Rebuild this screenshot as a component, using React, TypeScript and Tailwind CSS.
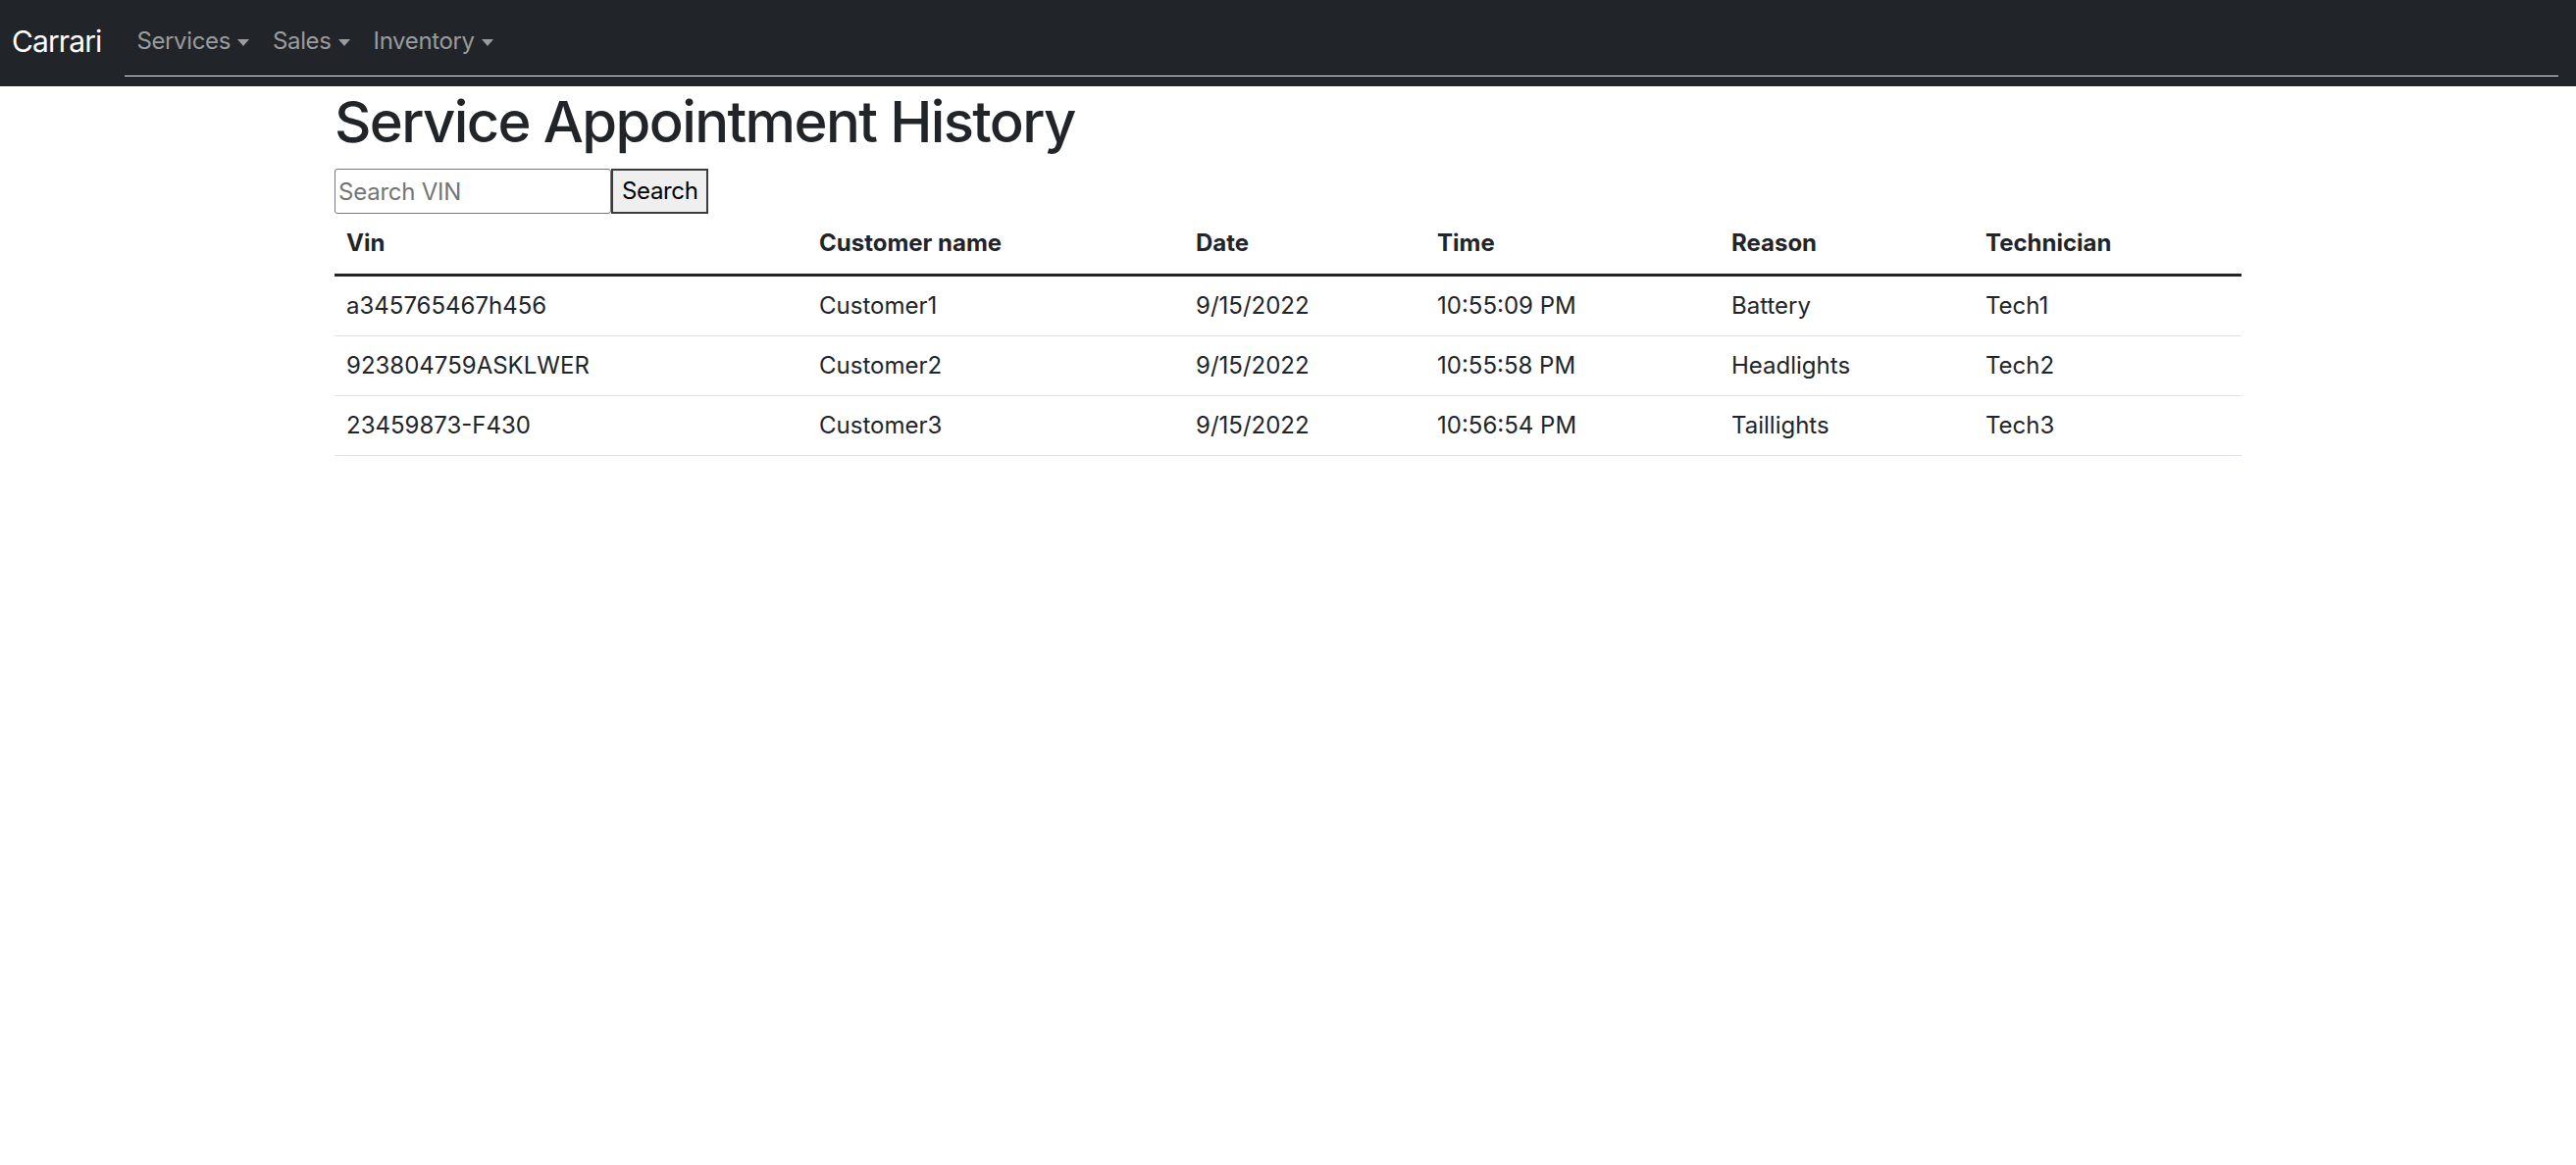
import { useState } from 'react';

const appointments = [
  { vin: 'a345765467h456', customer: 'Customer1', date: '9/15/2022', time: '10:55:09 PM', reason: 'Battery', tech: 'Tech1' },
  { vin: '923804759ASKLWER', customer: 'Customer2', date: '9/15/2022', time: '10:55:58 PM', reason: 'Headlights', tech: 'Tech2' },
  { vin: '23459873-F430', customer: 'Customer3', date: '9/15/2022', time: '10:56:54 PM', reason: 'Taillights', tech: 'Tech3' },
];

function NavItem({ label }: { label: string }) {
  return (
    <a className="flex items-center px-3 text-[24px] leading-[36px] tracking-[-0.015em] text-[#999b9e] cursor-pointer">
      {label}
      <span className="ml-[7px] mt-[2px] inline-block w-0 h-0 border-l-[6px] border-r-[6px] border-t-[7px] border-l-transparent border-r-transparent border-t-[#999b9e]" />
    </a>
  );
}

export default function App() {
  const [vin, setVin] = useState('');

  return (
    <div className="min-h-screen bg-white text-[#212529] font-['Inter','Liberation_Sans',sans-serif] text-[24px] leading-[36px]">
      {/* Navbar */}
      <nav className="h-[88px] bg-[#212529] flex items-start pl-3 pr-[18px]">
        <a className="mt-[20px] mr-6 text-[30px] leading-[45px] tracking-[-0.03em] text-white">Carrari</a>
        <div className="flex-1 h-[77.5px] border-b-[1.5px] border-[#e9ecef]">
          <div className="flex pt-[24px]">
            <NavItem label="Services" />
            <NavItem label="Sales" />
            <NavItem label="Inventory" />
          </div>
        </div>
      </nav>

      <div className="w-[1944px] mx-auto">
        <h1 className="text-[58px] leading-[72px] font-medium tracking-[-0.028em] mb-3">Service Appointment History</h1>

        <form className="flex" onSubmit={e => e.preventDefault()}>
          <input
            value={vin}
            onChange={e => setVin(e.target.value)}
            placeholder="Search VIN"
            className="w-[282px] h-[46px] border-[1.5px] border-[#767676] rounded-[3px] px-[3px] text-[24px] leading-[36px] tracking-[-0.01em] text-black placeholder:text-[#757575] outline-none"
          />
          <button className="h-[46px] px-[9px] bg-[#efefef] border-2 border-[#3b3b3b] text-[24px] leading-[36px] tracking-[-0.015em] text-black">
            Search
          </button>
        </form>

        <table className="w-full table-fixed border-separate border-spacing-0 text-left">
          <colgroup>
            <col className="w-[482px]" />
            <col className="w-[384px]" />
            <col className="w-[246px]" />
            <col className="w-[300px]" />
            <col className="w-[259px]" />
            <col />
          </colgroup>
          <thead>
            <tr>
              {['Vin', 'Customer name', 'Date', 'Time', 'Reason', 'Technician'].map(h => (
                <th key={h} className="px-3 pt-3 pb-[12.5px] font-bold border-b-[3px] border-[#212529]">{h}</th>
              ))}
            </tr>
          </thead>
          <tbody>
            {appointments.map(a => (
              <tr key={a.vin}>
                <td className="px-3 py-3 border-b-[1.5px] border-[#dee2e6]">{a.vin}</td>
                <td className="px-3 py-3 border-b-[1.5px] border-[#dee2e6]">{a.customer}</td>
                <td className="px-3 py-3 border-b-[1.5px] border-[#dee2e6]">{a.date}</td>
                <td className="px-3 py-3 border-b-[1.5px] border-[#dee2e6]">{a.time}</td>
                <td className="px-3 py-3 border-b-[1.5px] border-[#dee2e6]">{a.reason}</td>
                <td className="px-3 py-3 border-b-[1.5px] border-[#dee2e6]">{a.tech}</td>
              </tr>
            ))}
          </tbody>
        </table>
      </div>
    </div>
  );
}
